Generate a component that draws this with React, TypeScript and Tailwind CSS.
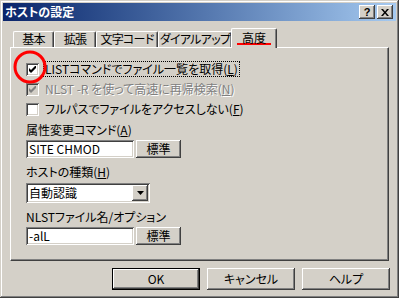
import React from "react";

const raised =
  "shadow-[inset_-1px_-1px_0_#404040,inset_1px_1px_0_#ffffff,inset_-2px_-2px_0_#808080,inset_2px_2px_0_#d4d0c8]";
const sunken =
  "shadow-[inset_1px_1px_0_#808080,inset_-1px_-1px_0_#ffffff,inset_2px_2px_0_#404040,inset_-2px_-2px_0_#d4d0c8]";
const font = "font-['Noto_Sans_CJK_JP',sans-serif] [font-feature-settings:'palt']";

function Check({ checked, disabled }: { checked?: boolean; disabled?: boolean }) {
  return (
    <div
      className={`w-[13px] h-[13px] shrink-0 flex items-center justify-center ${sunken} ${
        disabled ? "bg-[#d4d0c8]" : "bg-white"
      }`}
    >
      {checked && (
        <svg width="7" height="7" viewBox="0 0 7 7">
          <path
            d="M0 2 L0 5 L2 7 L7 2 L7 -1 L2 4 Z"
            fill={disabled ? "#808080" : "#000"}
          />
        </svg>
      )}
    </div>
  );
}

function Tab({ label, w }: { label: string; w: string }) {
  return (
    <div
      className={`${w} h-[16px] shrink-0 whitespace-nowrap pb-[1px] flex items-center justify-center text-[12px] tracking-[-0.7px] leading-none text-black rounded-t-[2px] border-l border-t border-white border-r border-r-[#404040] shadow-[inset_-1px_0_0_#808080]`}
    >
      {label}
    </div>
  );
}

function Btn({ label, w, def }: { label: string; w: string; def?: boolean }) {
  return (
    <div
      className={`${w} shrink-0 whitespace-nowrap flex items-center justify-center text-[12px] leading-none text-black bg-[#d4d0c8] ${
        def
          ? "shadow-[inset_0_0_0_1px_#000000,inset_-2px_-2px_0_#404040,inset_2px_2px_0_#ffffff,inset_-3px_-3px_0_#808080]"
          : raised
      }`}
    >
      {label}
    </div>
  );
}

export default function App() {
  return (
    <div
      className={`relative w-[399px] h-[298px] bg-[#d4d0c8] p-[3px] ${font} shadow-[inset_-1px_-1px_0_#404040,inset_1px_1px_0_#d4d0c8,inset_-2px_-2px_0_#808080,inset_2px_2px_0_#ffffff]`}
    >
      {/* Title bar */}
      <div className="h-[18px] flex items-center bg-gradient-to-r from-[#0a246a] to-[#a6caf0] pl-[2px] pr-[3px]">
        <div className="text-white font-bold text-[12px] leading-none">ホストの設定</div>
        <div className="ml-auto flex gap-[2px]">
          <div
            className={`w-[16px] h-[14px] flex items-center justify-center bg-[#d4d0c8] ${raised} text-[11px] font-bold leading-none font-['Liberation_Sans',sans-serif]`}
          >
            ?
          </div>
          <div
            className={`w-[16px] h-[14px] flex items-center justify-center bg-[#d4d0c8] ${raised}`}
          >
            <svg width="8" height="7" viewBox="0 0 8 7">
              <path d="M0 0 H2 L4 2.5 L6 0 H8 L5 3.5 L8 7 H6 L4 4.5 L2 7 H0 L3 3.5 Z" fill="#000" />
            </svg>
          </div>
        </div>
      </div>

      {/* Tabs */}
      <div className="h-[26px] flex items-end pl-[10px]">
        <Tab label="基本" w="w-[41px]" />
        <Tab label="拡張" w="w-[42px]" />
        <Tab label="文字コード" w="w-[62px]" />
        <Tab label="ダイアルアップ" w="w-[74px]" />
        <div className="relative z-10 shrink-0 whitespace-nowrap -ml-[1px] -mb-[1px] w-[46px] h-[20px] bg-[#d4d0c8] flex justify-center pt-[3px] text-[12px] leading-none text-black rounded-t-[2px] border-l border-t border-white border-r border-r-[#404040] shadow-[inset_-1px_0_0_#808080]">
          <span className="px-[5px] h-[13px] border-b-2 border-[#ff0000]">高度</span>
        </div>
      </div>

      {/* Panel */}
      <div className="ml-[7px] w-[379px] h-[214px] border-l border-t border-white border-r border-b border-r-[#404040] border-b-[#404040] shadow-[inset_-1px_-1px_0_#808080] pl-[15px] pt-[11px] text-[12px] text-black leading-none">
        <div className="h-[20px] flex items-center">
          <Check checked />
          <div className="ml-[4px] px-[1px] h-[16px] flex items-center border border-dotted border-black">
            LISTコマンドでファイル一覧を取得(<span className="underline">L</span>)
          </div>
        </div>
        <div className="h-[20px] flex items-center">
          <Check checked disabled />
          <div className="ml-[6px] text-[#808080] [text-shadow:1px_1px_0_#ffffff]">
            NLST -R を使って高速に再帰検索(<span className="underline">N</span>)
          </div>
        </div>
        <div className="h-[20px] flex items-center">
          <Check />
          <div className="ml-[6px]">
            フルパスでファイルをアクセスしない(<span className="underline">F</span>)
          </div>
        </div>

        <div className="mt-[3px] h-[16px] flex items-center">
          属性変更コマンド(<span className="underline">A</span>)
        </div>
        <div className="mt-[2px] flex gap-[2px]">
          <div className={`w-[108px] h-[18px] bg-white ${sunken} flex items-center pl-[3px]`}>SITE CHMOD</div>
          <Btn label="標準" w="w-[45px] h-[18px]" />
        </div>

        <div className="mt-[6px] h-[16px] flex items-center">
          ホストの種類(<span className="underline">H</span>)
        </div>
        <div className={`mt-[3px] w-[124px] h-[20px] bg-white ${sunken} flex items-center pl-[3px] pr-[2px]`}>
          <span>自動認識</span>
          <div className={`ml-auto w-[16px] h-[16px] bg-[#d4d0c8] ${raised} flex items-center justify-center`}>
            <svg width="7" height="4" viewBox="0 0 7 4">
              <path d="M0 0 H7 L3.5 4 Z" fill="#000" />
            </svg>
          </div>
        </div>

        <div className="mt-[6px] h-[16px] flex items-center">NLSTファイル名/オプション</div>
        <div className="mt-[2px] flex gap-[2px]">
          <div className={`w-[108px] h-[18px] bg-white ${sunken} flex items-center pl-[3px]`}>-alL</div>
          <Btn label="標準" w="w-[45px] h-[18px]" />
        </div>
      </div>

      {/* Bottom buttons */}
      <div className="mt-[7px] flex justify-end gap-[7px] pr-[6px]">
        <Btn label="OK" w="w-[88px] h-[22px]" def />
        <Btn label="キャンセル" w="w-[88px] h-[22px]" />
        <Btn label="ヘルプ" w="w-[88px] h-[22px]" />
      </div>

      {/* Red annotation circle */}
      <svg className="absolute left-[13px] top-[50px]" width="34" height="34" viewBox="0 0 34 34">
        <circle cx="17" cy="17" r="15" fill="none" stroke="#ff0000" strokeWidth="3" />
      </svg>
    </div>
  );
}
